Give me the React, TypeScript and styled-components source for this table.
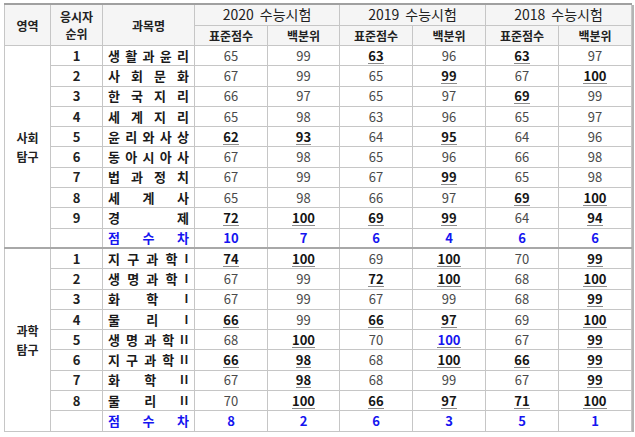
import React from "react";
import styled, { createGlobalStyle } from "styled-components";

const Global = createGlobalStyle`
  html, body { margin: 0; padding: 0; background: #fff; }
  body { font-family: "Noto Sans CJK KR", "Noto Sans", sans-serif; }
`;

const Page = styled.div`
  padding: 3px 0 0 4px;
`;

const Table = styled.table`
  border-collapse: collapse;
  table-layout: fixed;
  width: 627px;
  border: 1px solid #a8a8a8;
  border-top: 2px solid #a0a0a0;
  box-shadow: 2px 2px 0 #b4b4b4;
  color: #444;
`;

const Th = styled.th<{ $big?: boolean }>`
  background: #f5f5f5;
  border: 1px solid #c6c6c6;
  height: 19.5px;
  padding: 0;
  font-size: ${(p) => (p.$big ? "14px" : "12px")};
  font-weight: ${(p) => (p.$big ? 400 : 700)};
  color: #222;
  line-height: 17px;
  text-align: center;
  word-spacing: ${(p) => (p.$big ? "3px" : "0")};
`;

const Tr = styled.tr<{ $sep?: boolean }>`
  height: 20.3px;
  & > td {
    border-top: ${(p) => (p.$sep ? "2px solid #a8a8a8" : "1px solid #c6c6c6")};
  }
`;

const GroupCell = styled.td`
  border: 1px solid #c6c6c6;
  text-align: center;
  vertical-align: middle;
  font-size: 12px;
  font-weight: 700;
  color: #222;
  line-height: 19px;
  padding: 0;
`;

const RankCell = styled.td`
  border: 1px solid #c6c6c6;
  text-align: center;
  font-size: 13px;
  font-weight: 700;
  color: #222;
  padding: 0;
  line-height: 18px;
`;

const SubjectCell = styled.td`
  border: 1px solid #c6c6c6;
  padding: 0 5px 0 5px;
`;

const Spread = styled.div<{ $blue?: boolean }>`
  display: flex;
  justify-content: space-between;
  align-items: center;
  font-size: 13px;
  font-weight: 700;
  line-height: 18px;
  color: ${(p) => (p.$blue ? "#1515f0" : "#1a1a1a")};
`;

const Roman = styled.span`
  font-family: "Liberation Sans", sans-serif;
  font-weight: 700;
  font-size: 12px;
  letter-spacing: 1px;
`;

const NumCell = styled.td<{ $diff?: boolean }>`
  border: 1px solid #c6c6c6;
  text-align: center;
  padding: 0;
  font-size: 13px;
  line-height: 18px;
  font-weight: ${(p) => (p.$diff ? 700 : 400)};
  color: ${(p) => (p.$diff ? "#1515f0" : "#4a4a4a")};
`;

const Mark = styled.span<{ $blue?: boolean }>`
  font-weight: 700;
  color: ${(p) => (p.$blue ? "#1515f0" : "#151515")};
  border-bottom: 1px solid #8a8a8a;
  padding-bottom: 0px;
  display: inline-block;
  line-height: 15px;
`;

type Val = string; // "*" prefix = underlined, "b" prefix = blue underlined

interface Row {
  rank: string;
  name: string[];
  vals: Val[];
}

const social: Row[] = [
  { rank: "1", name: ["생", "활", "과", "윤", "리"], vals: ["65", "99", "*63", "96", "*63", "97"] },
  { rank: "2", name: ["사", "회", "문", "화"], vals: ["67", "99", "65", "*99", "67", "*100"] },
  { rank: "3", name: ["한", "국", "지", "리"], vals: ["66", "97", "65", "97", "*69", "99"] },
  { rank: "4", name: ["세", "계", "지", "리"], vals: ["65", "98", "63", "96", "65", "97"] },
  { rank: "5", name: ["윤", "리", "와", "사", "상"], vals: ["*62", "*93", "64", "*95", "64", "96"] },
  { rank: "6", name: ["동", "아", "시", "아", "사"], vals: ["67", "98", "65", "96", "66", "98"] },
  { rank: "7", name: ["법", "과", "정", "치"], vals: ["67", "99", "67", "*99", "65", "98"] },
  { rank: "8", name: ["세", "계", "사"], vals: ["65", "98", "66", "97", "*69", "*100"] },
  { rank: "9", name: ["경", "제"], vals: ["*72", "*100", "*69", "*99", "64", "*94"] },
];
const socialDiff = ["10", "7", "6", "4", "6", "6"];

const science: Row[] = [
  { rank: "1", name: ["지", "구", "과", "학", "I"], vals: ["*74", "*100", "69", "*100", "70", "*99"] },
  { rank: "2", name: ["생", "명", "과", "학", "I"], vals: ["67", "99", "*72", "*100", "68", "*100"] },
  { rank: "3", name: ["화", "학", "I"], vals: ["67", "99", "67", "99", "68", "*99"] },
  { rank: "4", name: ["물", "리", "I"], vals: ["*66", "99", "*66", "*97", "69", "*100"] },
  { rank: "5", name: ["생", "명", "과", "학", "II"], vals: ["68", "*100", "70", "b100", "67", "*99"] },
  { rank: "6", name: ["지", "구", "과", "학", "II"], vals: ["*66", "*98", "68", "*100", "*66", "*99"] },
  { rank: "7", name: ["화", "학", "II"], vals: ["67", "*98", "68", "99", "67", "*99"] },
  { rank: "8", name: ["물", "리", "II"], vals: ["70", "*100", "*66", "*97", "*71", "*100"] },
];
const scienceDiff = ["8", "2", "6", "3", "5", "1"];

const NameChars: React.FC<{ chars: string[]; blue?: boolean }> = ({ chars, blue }) => (
  <Spread $blue={blue}>
    {chars.map((c, i) =>
      /^I+$/.test(c) ? <Roman key={i}>{c}</Roman> : <span key={i}>{c}</span>
    )}
  </Spread>
);

const Value: React.FC<{ v: Val }> = ({ v }) => {
  if (v.startsWith("*"))
    return (
      <NumCell>
        <Mark>{v.slice(1)}</Mark>
      </NumCell>
    );
  if (v.startsWith("b"))
    return (
      <NumCell>
        <Mark $blue>{v.slice(1)}</Mark>
      </NumCell>
    );
  return <NumCell>{v}</NumCell>;
};

const Group: React.FC<{ label: [string, string]; rows: Row[]; diff: string[]; sep?: boolean }> = ({
  label,
  rows,
  diff,
  sep,
}) => (
  <>
    {rows.map((r, i) => (
      <Tr key={r.rank} $sep={sep && i === 0}>
        {i === 0 && (
          <GroupCell rowSpan={rows.length + 1}>
            {label[0]}
            <br />
            {label[1]}
          </GroupCell>
        )}
        <RankCell>{r.rank}</RankCell>
        <SubjectCell>
          <NameChars chars={r.name} />
        </SubjectCell>
        {r.vals.map((v, j) => (
          <Value key={j} v={v} />
        ))}
      </Tr>
    ))}
    <Tr>
      <RankCell />
      <SubjectCell>
        <NameChars chars={["점", "수", "차"]} blue />
      </SubjectCell>
      {diff.map((d, j) => (
        <NumCell key={j} $diff>
          {d}
        </NumCell>
      ))}
    </Tr>
  </>
);

export default function App() {
  return (
    <Page>
      <Global />
      <Table>
        <colgroup>
          <col style={{ width: 46 }} />
          <col style={{ width: 52 }} />
          <col style={{ width: 92 }} />
          <col style={{ width: 73 }} />
          <col style={{ width: 72 }} />
          <col style={{ width: 73 }} />
          <col style={{ width: 73 }} />
          <col style={{ width: 73 }} />
          <col style={{ width: 73 }} />
        </colgroup>
        <thead>
          <tr>
            <Th rowSpan={2}>영역</Th>
            <Th rowSpan={2}>
              응시자
              <br />
              순위
            </Th>
            <Th rowSpan={2}>과목명</Th>
            <Th colSpan={2} $big>
              2020 수능시험
            </Th>
            <Th colSpan={2} $big>
              2019 수능시험
            </Th>
            <Th colSpan={2} $big>
              2018 수능시험
            </Th>
          </tr>
          <tr>
            <Th>표준점수</Th>
            <Th>백분위</Th>
            <Th>표준점수</Th>
            <Th>백분위</Th>
            <Th>표준점수</Th>
            <Th>백분위</Th>
          </tr>
        </thead>
        <tbody>
          <Group label={["사회", "탐구"]} rows={social} diff={socialDiff} />
          <Group label={["과학", "탐구"]} rows={science} diff={scienceDiff} sep />
        </tbody>
      </Table>
    </Page>
  );
}
